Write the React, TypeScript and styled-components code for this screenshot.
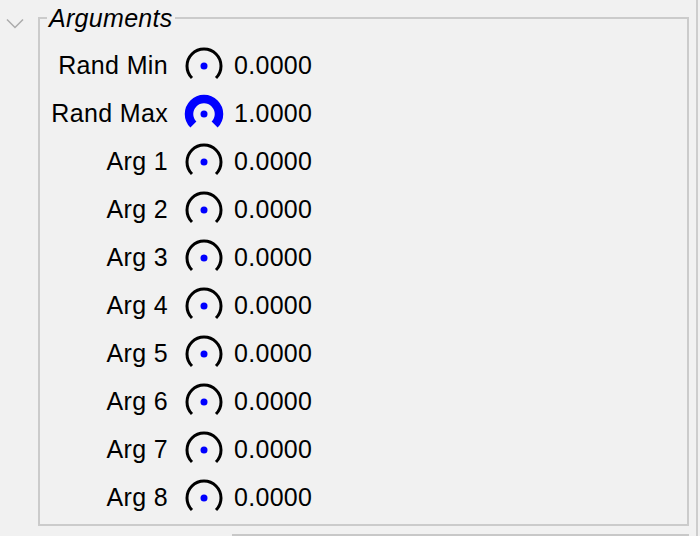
import React from "react";
import styled, { createGlobalStyle } from "styled-components";

const Global = createGlobalStyle`
  html, body { margin: 0; padding: 0; background: #f1f1f1; }
  body { font-family: "Liberation Sans", Arial, Helvetica, sans-serif; color: #000; }
  #root { width: 700px; height: 536px; overflow: hidden; }
`;

const Page = styled.div`
  width: 700px;
  height: 536px;
  display: flex;
  flex-direction: row;
  background: #f1f1f1;
`;

const Gutter = styled.div`
  width: 38px;
  flex: none;
  padding-top: 16px;
  padding-left: 6px;
  box-sizing: border-box;
`;

const Main = styled.div`
  width: 651px;
  flex: none;
  display: flex;
  flex-direction: column;
`;

const Frame = styled.fieldset`
  margin: 4px 0 0 0;
  padding: 0;
  border: 2px solid #cbcbcb;
  height: 522px;
  box-sizing: border-box;
  min-width: 0;
`;

const Legend = styled.legend`
  font-style: italic;
  font-size: 25px;
  line-height: 28px;
  padding: 0 2px;
  margin-left: 7px;
  letter-spacing: 0.3px;
`;

const List = styled.div`
  display: flex;
  flex-direction: column;
  padding-top: 9px;
`;

const Row = styled.div`
  display: flex;
  align-items: center;
  height: 48px;
`;

const Label = styled.div`
  width: 128px;
  text-align: right;
  font-size: 25px;
  letter-spacing: 0.35px;
  white-space: nowrap;
`;

const KnobBox = styled.div`
  margin-left: 16px;
  width: 40px;
  height: 40px;
  display: flex;
  align-items: center;
  justify-content: center;
  margin-top: 2px;
`;

const Value = styled.div`
  margin-left: 10px;
  font-size: 25px;
  letter-spacing: 0.3px;
`;

const BottomBar = styled.div`
  margin-top: 8px;
  margin-left: 194px;
  height: 2px;
  background: #c8c8c8;
`;

const RightEdge = styled.div`
  margin-left: 7px;
  width: 2px;
  height: 536px;
  background: #cdcdcd;
`;

function polar(cx: number, cy: number, r: number, deg: number) {
  const a = (deg * Math.PI) / 180;
  return [cx + r * Math.cos(a), cy + r * Math.sin(a)];
}

function Knob({ value }: { value: number }) {
  const active = value > 0;
  const r = active ? 15 : 17;
  const sw = active ? 8.5 : 3;
  const color = active ? "#0000ff" : "#000";
  const [x1, y1] = polar(20, 20, r, 135);
  const [x2, y2] = polar(20, 20, r, 45);
  const d = `M ${x1} ${y1} A ${r} ${r} 0 1 1 ${x2} ${y2}`;
  return (
    <KnobBox>
      <svg width="40" height="40" viewBox="0 0 40 40">
        <path d={d} fill="none" stroke={color} strokeWidth={sw} strokeLinecap="butt" />
        <circle cx="20" cy="20" r="3.5" fill="#0000ff" />
      </svg>
    </KnobBox>
  );
}

const rows: { label: string; value: number }[] = [
  { label: "Rand Min", value: 0 },
  { label: "Rand Max", value: 1 },
  { label: "Arg 1", value: 0 },
  { label: "Arg 2", value: 0 },
  { label: "Arg 3", value: 0 },
  { label: "Arg 4", value: 0 },
  { label: "Arg 5", value: 0 },
  { label: "Arg 6", value: 0 },
  { label: "Arg 7", value: 0 },
  { label: "Arg 8", value: 0 },
];

export default function App() {
  return (
    <Page>
      <Global />
      <Gutter>
        <svg width="18" height="12" viewBox="0 0 18 12">
          <path d="M1 1.5 L9 9.5 L17 1.5" fill="none" stroke="#ababab" strokeWidth="1.5" />
        </svg>
      </Gutter>
      <Main>
        <Frame>
          <Legend>Arguments</Legend>
          <List>
            {rows.map((r) => (
              <Row key={r.label}>
                <Label>{r.label}</Label>
                <Knob value={r.value} />
                <Value>{r.value.toFixed(4)}</Value>
              </Row>
            ))}
          </List>
        </Frame>
        <BottomBar />
      </Main>
      <RightEdge />
    </Page>
  );
}
